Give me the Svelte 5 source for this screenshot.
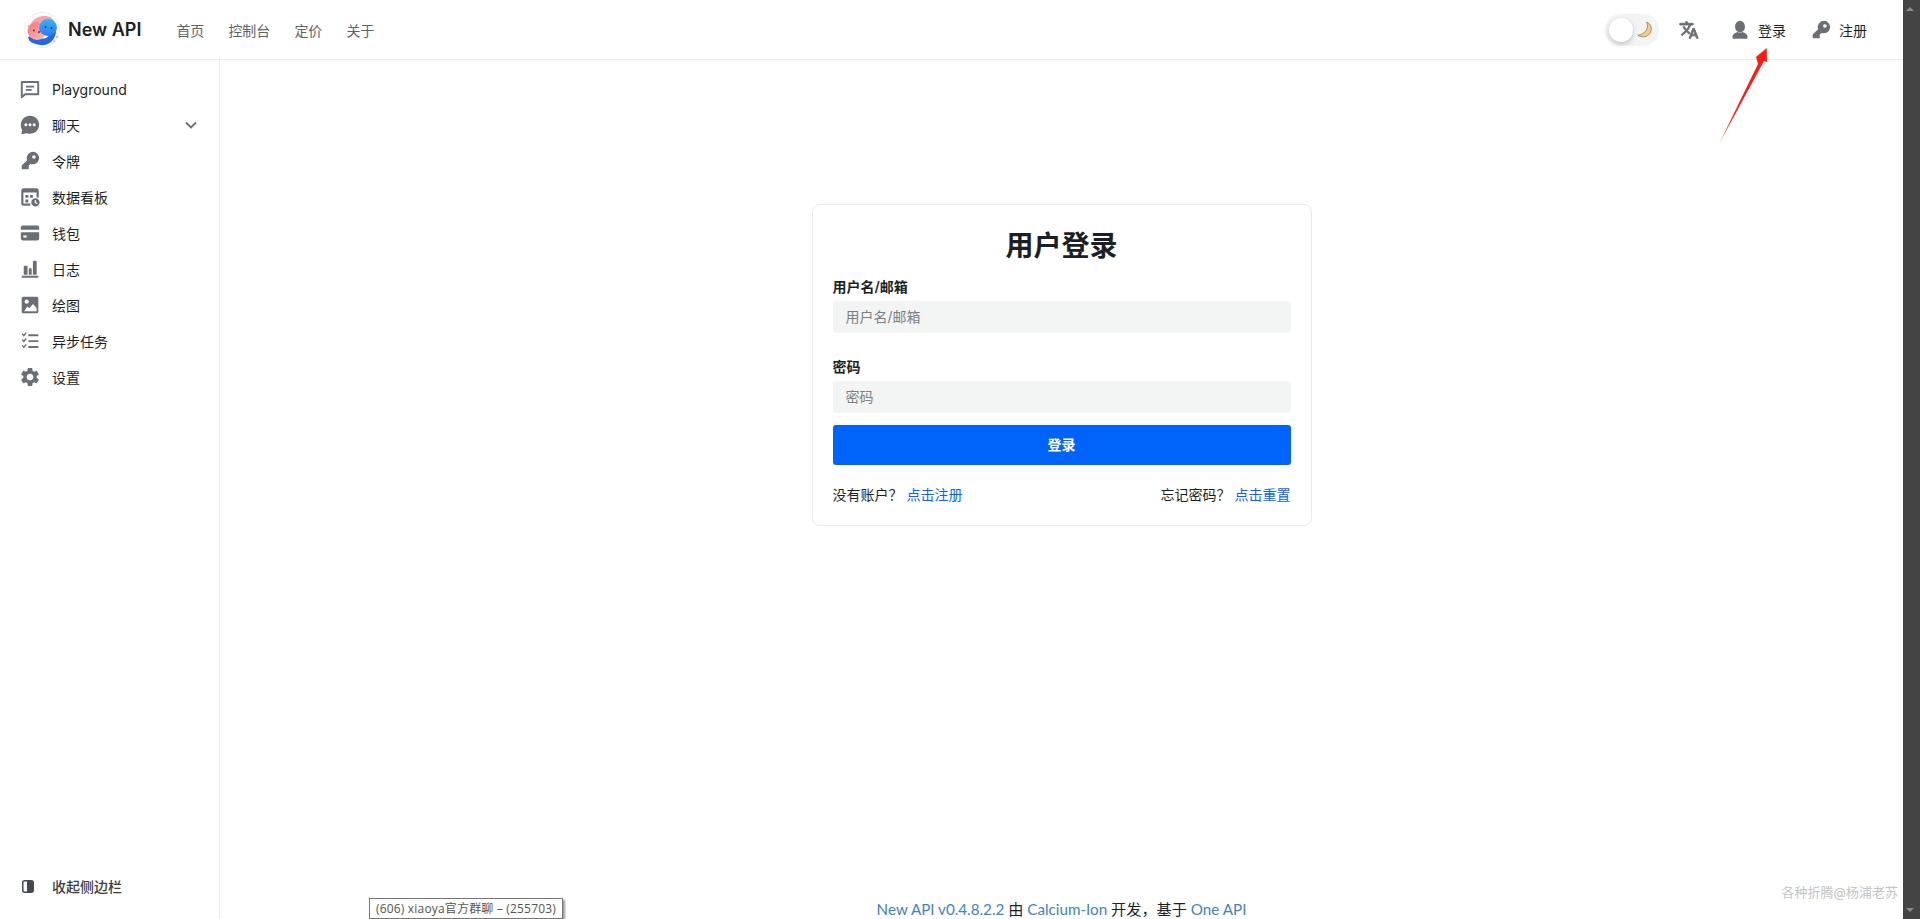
<script lang="ts">
	const nav = ['首页', '控制台', '定价', '关于'];

	const menu = [
		{ id: 'playground', label: 'Playground' },
		{ id: 'chat', label: '聊天', arrow: true },
		{ id: 'key', label: '令牌' },
		{ id: 'board', label: '数据看板' },
		{ id: 'card', label: '钱包' },
		{ id: 'log', label: '日志' },
		{ id: 'image', label: '绘图' },
		{ id: 'task', label: '异步任务' },
		{ id: 'gear', label: '设置' },
	];

	const keyPath =
		'M15.500 1a7.500 7.500 0 1 1-2.800 14.500L10.500 17.500V21a1 1 0 0 1-1 1H3a1 1 0 0 1-1-1v-3.500l6.500-6.500A7.500 7.500 0 0 1 15.500 1zm1.200 4a2.200 2.200 0 1 0 0 4.400 2.200 2.200 0 0 0 0-4.400z';
</script>

{#snippet icon(id: string)}
	<svg class="icon" viewBox="0 0 24 24" aria-hidden="true">
		{#if id === 'playground'}
			<path
				fill-rule="evenodd"
				d="M2.500 2.500h19A1.500 1.500 0 0 1 23 4v14a1.500 1.500 0 0 1-1.500 1.500H6.500L2.500 23H2a1 1 0 0 1-1-1V4a1.500 1.500 0 0 1 1.500-1.500zM3.300 4.800v14.500l2.300-2.100h15.100V4.800H3.300zM7 8h10v2.200H7V8zm0 4h7v2.200H7V12z"
			/>
		{:else if id === 'chat'}
			<path
				fill-rule="evenodd"
				d="M12 1c6.100 0 11 4.700 11 10.800S18.100 22.600 12 22.600c-1.500 0-3-.3-4.300-.8L2.500 23c-.6.1-1-.4-.8-1l1-3.800A10.600 10.600 0 0 1 1 11.800C1 5.700 5.900 1 12 1zM7 10a1.800 1.800 0 1 0 0 3.600A1.800 1.800 0 0 0 7 10zm5 0a1.800 1.800 0 1 0 0 3.600 1.800 1.800 0 0 0 0-3.600zm5 0a1.800 1.800 0 1 0 0 3.600 1.800 1.800 0 0 0 0-3.600z"
			/>
		{:else if id === 'key'}
			<path fill-rule="evenodd" d={keyPath} />
		{:else if id === 'board'}
			<path
				fill-rule="evenodd"
				d="M4.500 1.500h15A3 3 0 0 1 22.500 4.500v8h-2.600V6.500H4.100v13.400h8.400v2.600h-8a3 3 0 0 1-3-3v-15a3 3 0 0 1 3-3z"
			/>
			<path d="M6.500 9.500h3.500V13H6.500zM6.500 15h3.500v3.500H6.500zM12 9.500h3.500V13H12z" />
			<path
				fill-rule="evenodd"
				d="M18.500 13.500a5 5 0 1 1 0 10 5 5 0 0 1 0-10zm-.8 2v3.600l2.800 1.200.5-1.200-1.900-.9v-2.700h-1.400z"
			/>
		{:else if id === 'card'}
			<path
				fill-rule="evenodd"
				d="M3.500 3h17A2.500 2.500 0 0 1 23 5.500V8H1V5.500A2.500 2.500 0 0 1 3.500 3zM1 11h22v7.500a2.500 2.500 0 0 1-2.500 2.500h-17A2.500 2.500 0 0 1 1 18.500V11zm3 4v2.500h4V15H4z"
			/>
		{:else if id === 'log'}
			<path
				d="M2 20h20v2.500H2V20zM4.500 9a1 1 0 0 1 1-1h2.500a1 1 0 0 1 1 1v10H4.500V9zM10.500 12a1 1 0 0 1 1-1h1.500a1 1 0 0 1 1 1v7h-3.500v-7zM15.500 3a1 1 0 0 1 1-1h2.500a1 1 0 0 1 1 1v16h-4.500V3z"
			/>
		{:else if id === 'image'}
			<path
				fill-rule="evenodd"
				d="M4 2h16a2 2 0 0 1 2 2v16a2 2 0 0 1-2 2H4a2 2 0 0 1-2-2V4a2 2 0 0 1 2-2zm4 3.500a2.500 2.500 0 1 0 0 5 2.500 2.500 0 0 0 0-5zM5 19.500h15v-3.800l-4.500-5-4.300 5.300-2.400-2.200L5 19.500z"
			/>
		{:else if id === 'task'}
			<path d="M10 4h12v2.300H10V4zm0 7h12v2.300H10V11zm0 7h12v2.300H10V18z" />
			<path
				d="M2 3.800l1.300-1 1.200 1.400L7 1.500l1.200 1L4.600 6.800 2 3.800zm0 7l1.300-1 1.200 1.400L7 8.500l1.200 1-3.600 4.300-2.600-3zm0 7l1.300-1 1.200 1.400 2.500-2.700 1.200 1-3.600 4.300-2.600-3z"
			/>
		{:else if id === 'gear'}
			<path
				d="M19.140 12.940c.04-.3.06-.61.06-.94 0-.32-.02-.64-.07-.94l2.030-1.580c.18-.14.23-.41.12-.61l-1.920-3.320c-.12-.22-.37-.29-.59-.22l-2.390.96c-.5-.38-1.030-.7-1.620-.94l-.36-2.540c-.04-.24-.24-.41-.48-.41h-3.840c-.24 0-.43.17-.47.41l-.36 2.540c-.59.24-1.130.57-1.620.94l-2.390-.96c-.22-.08-.47 0-.59.22L2.740 8.870c-.12.21-.08.47.12.61l2.030 1.580c-.05.3-.09.63-.09.94s.02.64.07.94l-2.030 1.580c-.18.14-.23.41-.12.61l1.920 3.320c.12.22.37.29.59.22l2.390-.96c.5.38 1.030.7 1.620.94l.36 2.540c.05.24.24.41.48.41h3.840c.24 0 .44-.17.47-.41l.36-2.540c.59-.24 1.130-.56 1.620-.94l2.390.96c.22.08.47 0 .59-.22l1.920-3.320c.12-.22.07-.47-.12-.61l-2.010-1.580zM12 15.600c-1.980 0-3.600-1.620-3.600-3.600s1.620-3.600 3.600-3.600 3.600 1.620 3.600 3.600-1.620 3.600-3.600 3.600z"
				transform="translate(-1.500 -1.500) scale(1.125)"
			/>
		{/if}
	</svg>
{/snippet}

<div class="page">
	<div class="shell">
		<header class="topbar">
			<div class="brand">
				<svg class="logo" viewBox="0 0 36 36" aria-hidden="true">
					<defs>
						<linearGradient id="pink" x1="0" y1="0" x2="1" y2="1">
							<stop offset="0" stop-color="#fb6f76" />
							<stop offset="1" stop-color="#fdc4b8" />
						</linearGradient>
						<linearGradient id="sky" x1="0" y1="0" x2="0" y2="1">
							<stop offset="0" stop-color="#35b4f7" />
							<stop offset="1" stop-color="#2a7cf0" />
						</linearGradient>
					</defs>
					<circle cx="18" cy="18" r="17.500" fill="#fff" stroke="#e2e2e6" stroke-width="0.700" />
					<path d="M6 18C5 8 15 2.500 24 4.500c3 .7 5 2.500 6 4.500l-5 2c-5-3-11-1-12 4z" fill="#fba0a6" />
					<path d="M4 25c1 6 7 7 12 8 8 1 15-4 16-13l-5-2c-1 6-4 9-9 8.500-5-.5-9-3-14-1.500z" fill="#2467e6" />
					<ellipse cx="13" cy="19" rx="9.500" ry="9" fill="url(#pink)" />
					<ellipse cx="24" cy="15.500" rx="9" ry="8.500" fill="url(#sky)" />
					<circle cx="10" cy="18.500" r="0.900" fill="#53262b" />
					<circle cx="15" cy="20" r="0.900" fill="#53262b" />
					<circle cx="21.500" cy="15" r="0.900" fill="#10306a" />
					<circle cx="27.500" cy="16" r="0.900" fill="#10306a" />
					<circle cx="4.500" cy="14" r="1" fill="#f79aa4" />
					<circle cx="33" cy="25" r="0.800" fill="#3d8bf0" />
					<circle cx="30" cy="29" r="0.700" fill="#3d8bf0" />
				</svg>
				<span class="brand-name">New API</span>
			</div>
			<nav class="nav">
				{#each nav as item}
					<span>{item}</span>
				{/each}
			</nav>
			<div class="actions">
				<div class="toggle">
					<span class="knob"></span>
					<svg class="moon" viewBox="0 0 24 24" aria-hidden="true">
						<path
							d="M15 1.500C21 4 23.500 11 20 17c-3.500 5.500-11 7-17.500 3 0 0 6-.5 10-4.500s4.500-9.500 2.500-14z"
							fill="#f9cf7c"
							stroke="#77705c"
							stroke-width="1"
						/>
					</svg>
				</div>
				<svg class="icon translate" viewBox="0 0 24 24" aria-hidden="true">
					<path
						stroke="#6b6f75"
						stroke-width="1.100"
						d="M12.870 15.070l-2.540-2.510.03-.03c1.740-1.940 2.980-4.170 3.710-6.530H17V4h-7V2H8v2H1v1.990h11.170C11.500 7.920 10.440 9.750 9 11.350 8.070 10.320 7.300 9.190 6.690 8h-2c.73 1.630 1.730 3.170 2.980 4.560l-5.090 5.020L4 19l5-5 3.110 3.110.76-2.040zM18.500 10h-2L12 22h2l1.120-3h4.750L21 22h2l-4.500-12zm-2.620 7l1.620-4.330L19.120 17h-3.240z"
					/>
				</svg>
				<span class="auth login">
					<svg class="icon" viewBox="0 0 24 24" aria-hidden="true">
						<ellipse cx="12" cy="8" rx="6" ry="7" />
						<path d="M3 20c0-3 3-4.500 6-5.500 1.800 1 4.200 1 6 0 3 1 6 2.500 6 5.500v1.500a1 1 0 0 1-1 1H4a1 1 0 0 1-1-1V20z" />
					</svg>
					登录
				</span>
				<span class="auth register">
					<svg class="icon" viewBox="0 0 24 24" aria-hidden="true">
						<path fill-rule="evenodd" d={keyPath} />
					</svg>
					注册
				</span>
			</div>
		</header>

		<div class="body">
			<aside class="sidebar">
				<ul class="menu">
					{#each menu as item}
						<li class="menu-item">
							{@render icon(item.id)}
							<span class="menu-label">{item.label}</span>
							{#if item.arrow}
								<svg class="chevron" viewBox="0 0 12 8" aria-hidden="true">
									<path d="M1 1.500l5 5 5-5" fill="none" stroke="#6b6f75" stroke-width="1.800" />
								</svg>
							{/if}
						</li>
					{/each}
				</ul>
				<div class="collapse">
					<svg class="collapse-icon" viewBox="0 0 12 13" aria-hidden="true">
						<rect x="0.750" y="0.750" width="10.500" height="11.500" rx="2" fill="#fff" stroke="#46494d" stroke-width="1.500" />
						<rect x="5" y="1" width="6" height="11" fill="#46494d" />
					</svg>
					<span>收起侧边栏</span>
				</div>
			</aside>

			<main class="content">
				<form class="card">
					<h1>用户登录</h1>
					<label class="field first">
						<span>用户名/邮箱</span>
						<input type="text" placeholder="用户名/邮箱" />
					</label>
					<label class="field">
						<span>密码</span>
						<input type="password" placeholder="密码" />
					</label>
					<button type="button" class="submit">登录</button>
					<div class="links">
						<span>没有账户？<a href="#register">点击注册</a></span>
						<span>忘记密码？<a href="#reset">点击重置</a></span>
					</div>
				</form>
				<footer class="foot">
					<a href="#version">New API v0.4.8.2.2</a> 由 <a href="#author">Calcium-Ion</a> 开发，基于
					<a href="#oneapi">One API</a>
				</footer>
			</main>
		</div>
	</div>

	<div class="scrollbar">
		<span class="up"></span>
		<span class="down"></span>
	</div>

	<svg class="arrow" viewBox="0 0 60 110" aria-hidden="true">
		<defs>
			<linearGradient id="arrow-fade" x1="0" y1="1" x2="1" y2="0">
				<stop offset="0" stop-color="#ff6a5c" />
				<stop offset="0.300" stop-color="#ff1a12" />
				<stop offset="1" stop-color="#ff1a12" />
			</linearGradient>
		</defs>
		<path d="M9 102L48 22 46 15 56.700 6 57 20 54 19z" fill="url(#arrow-fade)" />
	</svg>

	<div class="tooltip">(606) xiaoya官方群聊 – (255703)</div>
	<div class="watermark">各种折腾@杨浦老苏</div>
</div>

<style>
	:global(body) {
		overflow: hidden;
	}

	.page {
		position: relative;
		display: flex;
		height: 919px;
		font-family: Inter, 'Noto Sans CJK SC', sans-serif;
		font-size: 14px;
		color: #1c1f23;
		background: #fff;
		overflow: hidden;
	}

	.shell {
		flex: 1;
		display: flex;
		flex-direction: column;
		min-width: 0;
	}

	.topbar {
		display: flex;
		align-items: center;
		height: 59px;
		padding: 0 36px 0 24px;
		border-bottom: 1px solid #e9eaeb;
		flex-shrink: 0;
	}

	.brand {
		display: flex;
		align-items: center;
		gap: 8px;
	}

	.logo {
		width: 36px;
		height: 36px;
	}

	.brand-name {
		font-size: 18px;
		font-weight: 600;
		color: #1c1f23;
	}

	.nav {
		display: flex;
		gap: 24px;
		margin-left: 35px;
		color: #5f6368;
	}

	.actions {
		display: flex;
		align-items: center;
		margin-left: auto;
	}

	.toggle {
		display: flex;
		align-items: center;
		justify-content: space-between;
		width: 54px;
		height: 32px;
		padding: 0 6px 0 4px;
		box-sizing: border-box;
		border-radius: 16px;
		background: #f3f4f4;
	}

	.knob {
		width: 24px;
		height: 24px;
		border-radius: 50%;
		background: #fff;
		box-shadow: 0 2px 5px rgba(0, 0, 0, 0.22);
	}

	.moon {
		width: 17px;
		height: 17px;
	}

	.icon {
		width: 20px;
		height: 20px;
		flex-shrink: 0;
		fill: #6b6f75;
	}

	.translate {
		margin-left: 20px;
	}

	.auth {
		display: flex;
		align-items: center;
		gap: 8px;
	}

	.login {
		margin-left: 31px;
	}

	.register {
		margin-left: 25px;
	}

	.body {
		flex: 1;
		display: flex;
		min-height: 0;
	}

	.sidebar {
		display: flex;
		flex-direction: column;
		width: 220px;
		box-sizing: border-box;
		border-right: 1px solid #e9eaeb;
		flex-shrink: 0;
	}

	.menu {
		list-style: none;
		margin: 0;
		padding: 11px 0 0;
	}

	.menu-item {
		display: flex;
		align-items: center;
		height: 36px;
		padding: 0 22px 0 20px;
		gap: 12px;
	}

	.menu-label {
		flex: 1;
	}

	.chevron {
		width: 12px;
		height: 8px;
	}

	.collapse {
		display: flex;
		align-items: center;
		gap: 18px;
		margin-top: auto;
		padding: 0 0 18px 22px;
		height: 30px;
		font-weight: 500;
		color: #3a3d41;
	}

	.collapse-icon {
		width: 12px;
		height: 13px;
	}

	.content {
		position: relative;
		flex: 1;
		display: flex;
		flex-direction: column;
		align-items: center;
		padding-top: 144px;
		min-width: 0;
	}

	.card {
		width: 500px;
		height: 322px;
		box-sizing: border-box;
		padding: 20px;
		border: 1px solid #e9eaeb;
		border-radius: 8px;
		background: #fff;
	}

	h1 {
		margin: 3px 0 0;
		font-size: 28px;
		line-height: 36px;
		font-weight: 700;
		text-align: center;
		color: #1c1f23;
	}

	.field {
		display: block;
		margin-top: 24px;
		font-weight: 600;
	}

	.field.first {
		margin-top: 13px;
	}

	.field span {
		display: block;
		height: 20px;
		line-height: 20px;
		font-size: 14px;
		margin-bottom: 4px;
	}

	input {
		display: block;
		width: 100%;
		height: 32px;
		box-sizing: border-box;
		padding: 0 13px 1px;
		border: 0;
		border-radius: 3px;
		outline: none;
		background: #f3f4f4;
		font: inherit;
		font-weight: 400;
	}

	input::placeholder {
		color: #7b7f85;
	}

	.submit {
		display: block;
		width: 100%;
		height: 40px;
		margin-top: 12px;
		padding: 0 0 2px;
		border: 0;
		border-radius: 3px;
		background: #0064fa;
		color: #fff;
		font: inherit;
		font-weight: 600;
	}

	.links {
		display: flex;
		justify-content: space-between;
		margin-top: 20px;
		line-height: 20px;
	}

	.links a {
		margin-left: 4px;
		color: #0064fa;
		text-decoration: none;
	}

	.foot {
		position: absolute;
		left: 0;
		right: 0;
		bottom: 1px;
		height: 18px;
		line-height: 18px;
		text-align: center;
		font-family: Lato, 'Noto Sans CJK SC', sans-serif;
		font-size: 15.200px;
		color: #1c1f23;
	}

	.foot a {
		color: #4183c4;
		text-decoration: none;
	}

	.scrollbar {
		position: relative;
		width: 17px;
		background: #444;
		flex-shrink: 0;
	}

	.up,
	.down {
		position: absolute;
		left: 3px;
		border-left: 4px solid transparent;
		border-right: 4px solid transparent;
	}

	.up {
		top: 7px;
		border-bottom: 4px solid #8b8b8b;
	}

	.down {
		bottom: 7px;
		border-top: 4px solid #8b8b8b;
	}

	.arrow {
		position: absolute;
		left: 1710px;
		top: 42px;
		width: 60px;
		height: 110px;
	}

	.tooltip {
		position: absolute;
		left: 369px;
		top: 898px;
		height: 21px;
		line-height: 20px;
		box-sizing: border-box;
		padding: 0 6px;
		border: 1px solid #767676;
		background: #fff;
		box-shadow: 2px 2px 2px rgba(0, 0, 0, 0.4);
		font-family: 'Open Sans', 'Noto Sans CJK SC', sans-serif;
		font-size: 12px;
		letter-spacing: 0.180px;
		color: #555;
		white-space: nowrap;
	}

	.watermark {
		position: absolute;
		right: 22px;
		top: 882px;
		font-size: 13px;
		color: #c4c4c4;
	}
</style>
